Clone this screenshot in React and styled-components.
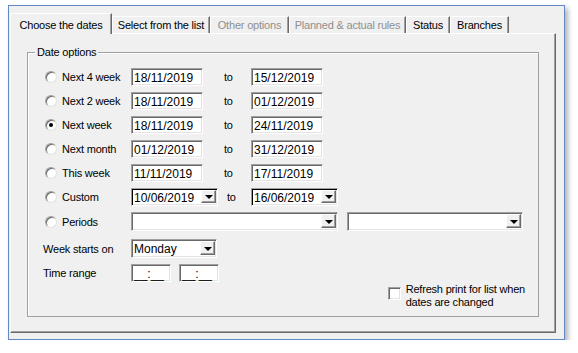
import React from "react"
import styled, { createGlobalStyle } from "styled-components"

const GlobalStyle = createGlobalStyle`
  body {
    margin: 0;
    background: #ffffff;
    font-family: "Liberation Sans", Arial, sans-serif;
    font-size: 11px;
    letter-spacing: -0.2px;
    color: #000;
  }
`

const Page = styled.div`
  padding: 5px 0 0 8px;
`

const Window = styled.div`
  box-sizing: border-box;
  width: 557px;
  height: 335px;
  border: 1px solid #6388c8;
  background: #f0f0f0;
  box-shadow: 3px 3px 5px rgba(0, 0, 0, 0.3);
  padding: 7px 0 0 1px;
`

const TabBar = styled.div`
  display: flex;
  align-items: flex-end;
  height: 20px;
`

const Tab = styled.div`
  box-sizing: border-box;
  width: ${p => p.$w}px;
  height: ${p => (p.$active ? 21 : 17)}px;
  margin-bottom: ${p => (p.$active ? -1 : 0)}px;
  position: relative;
  z-index: ${p => (p.$active ? 2 : 0)};
  background: #f0f0f0;
  border-top: 1px solid #fff;
  border-left: 1px solid #fff;
  border-right: 1px solid #696969;
  box-shadow: inset -1px 0 0 #a0a0a0;
  padding-top: ${p => (p.$active ? 5 : 2)}px;
  text-align: center;
  white-space: nowrap;
  color: ${p => (p.$disabled ? "#8f8f8f" : "#000")};
`

const Panel = styled.div`
  box-sizing: border-box;
  width: 546px;
  height: 300px;
  border-top: 1px solid #fff;
  border-left: 1px solid #fff;
  border-right: 1px solid #696969;
  border-bottom: 1px solid #696969;
  box-shadow: inset -1px -1px 0 #a0a0a0;
  padding: 18px 0 0 16px;
`

const Group = styled.div`
  position: relative;
  box-sizing: border-box;
  width: 512px;
  height: 265px;
  border: 1px solid #a0a0a0;
  box-shadow: inset 1px 1px 0 #fff;
  padding: 15px 0 0 15px;
  display: flex;
  flex-direction: column;
`

const Legend = styled.span`
  position: absolute;
  top: -7px;
  left: 7px;
  padding: 0 2px;
  background: #f0f0f0;
  line-height: 13px;
`

const Rows = styled.div`
  display: flex;
  flex-direction: column;
  gap: 6px;
`

const Row = styled.div`
  display: flex;
  align-items: center;
  height: ${p => p.$h || 18}px;
  margin-top: ${p => p.$mt || 0}px;
`

const Choice = styled.label`
  display: flex;
  align-items: center;
  width: 88px;
  flex: none;
`

const Radio = styled.span`
  box-sizing: border-box;
  width: 12px;
  height: 12px;
  margin: 0 5px 0 2px;
  border-radius: 50%;
  background: #fff;
  border: 1px solid;
  border-color: #a0a0a0 #e3e3e3 #e3e3e3 #a0a0a0;
  box-shadow: inset 1px 1px 0 #696969;
  display: flex;
  align-items: center;
  justify-content: center;
  &::after {
    content: "";
    width: 4px;
    height: 4px;
    border-radius: 50%;
    background: ${p => (p.$on ? "#000" : "transparent")};
  }
`

const Field = styled.div`
  box-sizing: border-box;
  width: ${p => p.$w}px;
  height: ${p => p.$h || 18}px;
  flex: none;
  background: #fff;
  border: 1px solid;
  border-color: #a0a0a0 #fff #fff #a0a0a0;
  box-shadow: inset 1px 1px 0 ${p => (p.$dark ? "#000" : "#696969")},
    inset -1px -1px 0 #e3e3e3;
  font-size: 12px;
  letter-spacing: 0;
  padding: 2px 0 0 2px;
  line-height: 14px;
  display: flex;
  align-items: flex-start;
  overflow: hidden;
`

const FieldText = styled.span`
  flex: 1;
`

const DropBtn = styled.span`
  box-sizing: border-box;
  width: 15px;
  height: ${p => p.$h || 13}px;
  margin: -1px 1px 0 0;
  background: #f0f0f0;
  border: 1px solid;
  border-color: #fff #696969 #696969 #fff;
  box-shadow: inset -1px -1px 0 #a0a0a0;
  display: flex;
  align-items: center;
  justify-content: center;
  &::after {
    content: "";
    border-left: 4px solid transparent;
    border-right: 4px solid transparent;
    border-top: 4px solid #000;
    margin-top: 1px;
  }
`

const To = styled.span`
  width: ${p => p.$w}px;
  padding-left: ${p => p.$pad}px;
  box-sizing: border-box;
  flex: none;
`

const Label = styled.span`
  width: 88px;
  flex: none;
`

const FieldGap = styled.div`
  display: flex;
  gap: ${p => p.$gap}px;
`

const CheckArea = styled.div`
  display: flex;
  justify-content: flex-end;
  padding-right: 13px;
  margin-top: 1px;
`

const CheckLabel = styled.label`
  display: flex;
  align-items: flex-start;
  gap: 5px;
  line-height: 13px;
`

const Check = styled.span`
  box-sizing: border-box;
  width: 13px;
  height: 13px;
  margin-top: 4px;
  background: #fff;
  border: 1px solid;
  border-color: #a0a0a0 #fff #fff #a0a0a0;
  box-shadow: inset 1px 1px 0 #696969, inset -1px -1px 0 #e3e3e3;
`

const tabs = [
  { label: "Choose the dates", w: 102, active: true },
  { label: "Select from the list", w: 98 },
  { label: "Other options", w: 79, disabled: true },
  { label: "Planned & actual rules", w: 117, disabled: true },
  { label: "Status", w: 44 },
  { label: "Branches", w: 59 },
]

const dateRows = [
  { label: "Next 4 week", from: "18/11/2019", to: "15/12/2019" },
  { label: "Next 2 week", from: "18/11/2019", to: "01/12/2019" },
  { label: "Next week", from: "18/11/2019", to: "24/11/2019", on: true },
  { label: "Next month", from: "01/12/2019", to: "31/12/2019" },
  { label: "This week", from: "11/11/2019", to: "17/11/2019" },
]

function Combo({ w, h, text, dark }) {
  return (
    <Field $w={w} $h={h} $dark={dark}>
      <FieldText>{text}</FieldText>
      <DropBtn $h={h ? h - 5 : 13} />
    </Field>
  )
}

export default function App() {
  return (
    <Page>
      <GlobalStyle />
      <Window>
        <TabBar>
          {tabs.map(t => (
            <Tab key={t.label} $w={t.w} $active={t.active} $disabled={t.disabled}>
              {t.label}
            </Tab>
          ))}
        </TabBar>
        <Panel>
          <Group>
            <Legend>Date options</Legend>
            <Rows>
              {dateRows.map(r => (
                <Row key={r.label}>
                  <Choice>
                    <Radio $on={r.on} />
                    {r.label}
                  </Choice>
                  <Field $w={72}>{r.from}</Field>
                  <To $w={48} $pad={21}>to</To>
                  <Field $w={72}>{r.to}</Field>
                </Row>
              ))}
              <Row>
                <Choice>
                  <Radio />
                  Custom
                </Choice>
                <Combo w={87} text="10/06/2019" dark />
                <To $w={33} $pad={9}>to</To>
                <Combo w={87} text="16/06/2019" dark />
              </Row>
              <Row $h={19}>
                <Choice>
                  <Radio />
                  Periods
                </Choice>
                <FieldGap $gap={9}>
                  <Combo w={207} h={19} />
                  <Combo w={176} h={19} />
                </FieldGap>
              </Row>
              <Row $h={19} $mt={2}>
                <Label>Week starts on</Label>
                <Combo w={86} h={19} text="Monday" />
              </Row>
              <Row>
                <Label>Time range</Label>
                <FieldGap $gap={8}>
                  <Field $w={40}>__:__</Field>
                  <Field $w={40}>__:__</Field>
                </FieldGap>
              </Row>
            </Rows>
            <CheckArea>
              <CheckLabel>
                <Check />
                <span>
                  Refresh print for list when
                  <br />
                  dates are changed
                </span>
              </CheckLabel>
            </CheckArea>
          </Group>
        </Panel>
      </Window>
    </Page>
  )
}
